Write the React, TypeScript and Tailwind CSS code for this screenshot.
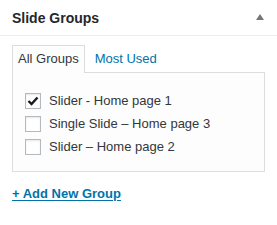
import React from "react";

const font = { fontFamily: '"Liberation Sans", Arial, sans-serif' };

function Checkbox({ checked }: { checked?: boolean }) {
  return (
    <span className="flex h-[16px] w-[16px] shrink-0 items-center justify-center border border-[#b4b9be] bg-white shadow-[inset_0_1px_2px_rgba(0,0,0,0.1)]">
      {checked && (
        <svg width="12" height="10" viewBox="0 0 12 10">
          <path d="M1.5 5 L4.5 8 L10.5 1.5" fill="none" stroke="#1a1a1a" strokeWidth="2.4" />
        </svg>
      )}
    </span>
  );
}

export default function App() {
  const items = [
    { label: "Slider - Home page 1", checked: true },
    { label: "Single Slide \u2013 Home page 3", checked: false },
    { label: "Slider \u2013 Home page 2", checked: false },
  ];
  return (
    <div className="h-[225px] w-[277px] bg-white text-[13px] text-[#32373c]" style={font}>
      <div className="flex h-[36px] items-center justify-between border-b border-[#eeeeee] pl-[12px] pr-[13px]">
        <h2 className="text-[14px] font-bold leading-none text-[#23282d]">Slide Groups</h2>
        <svg width="8" height="6" viewBox="0 0 8 6" className="mt-[-1px]">
          <path d="M4 0 L8 6 L0 6 Z" fill="#72777c" />
        </svg>
      </div>
      <div className="px-[12px] pt-[9px]">
        <div className="flex items-end">
          <div className="relative z-10 mb-[-1px] flex h-[28px] items-center border border-b-0 border-[#dddddd] bg-[#fdfdfd] px-[5px] pb-[1px]">
            All Groups
          </div>
          <div className="flex h-[27px] items-center pl-[10px] text-[#0073aa]">Most Used</div>
        </div>
        <div className="flex h-[100px] flex-col border border-[#dddddd] bg-[#fdfdfd] pl-[12px] pt-[16px]">
          {items.map((it) => (
            <label key={it.label} className="flex h-[23px] items-center gap-[8px]">
              <Checkbox checked={it.checked} />
              <span>{it.label}</span>
            </label>
          ))}
        </div>
        <div className="mt-[13px] leading-[18px]">
          <a className="font-bold text-[#0073aa] underline underline-offset-[2px]">+ Add New Group</a>
        </div>
      </div>
    </div>
  );
}
